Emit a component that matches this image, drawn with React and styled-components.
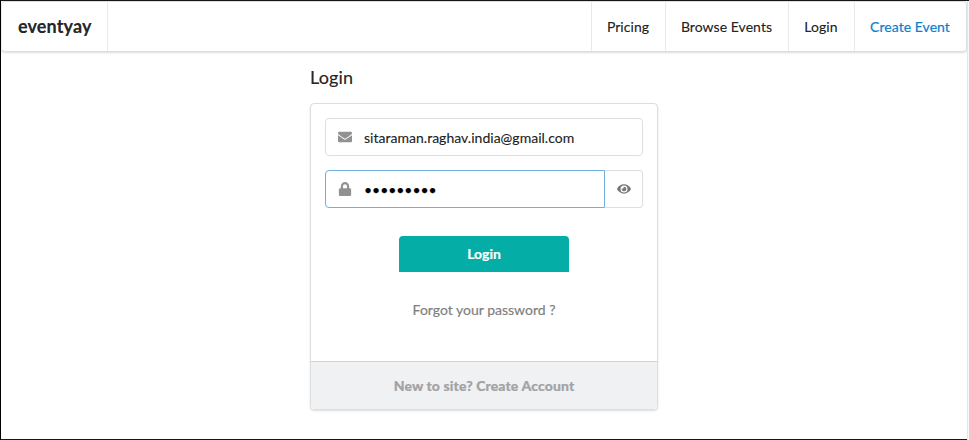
import React from 'react';
import styled, { createGlobalStyle } from 'styled-components';
import { FaEnvelope, FaLock, FaEye } from 'react-icons/fa';

const GlobalStyle = createGlobalStyle`
  * { box-sizing: border-box; }
  body {
    margin: 0;
    background: #fff;
    color: rgba(0, 0, 0, 0.87);
    font: 14px/20px Lato, "Liberation Sans", sans-serif;
    -webkit-text-stroke: 0.2px;
  }
`;

const Frame = styled.div`
  width: 969px;
  height: 440px;
  border-top: 1px solid #18161b;
  border-left: 1px solid #000;
  display: flex;
  overflow: hidden;
`;

const Page = styled.div`
  width: 966px;
  height: 439px;
  border-bottom: 1px solid #18161b;
`;

const Gutter = styled.div`
  flex: 1;
  background: #fafafa;
  border-left: 1px solid #e5e5e5;
`;

const NavBar = styled.nav`
  display: flex;
  height: 51px;
  border: 1px solid rgba(34, 36, 38, 0.15);
  border-left-color: rgba(34, 36, 38, 0.08);
  border-radius: 4px;
  box-shadow: 0 1px 2px rgba(34, 36, 38, 0.15);
`;

const NavItem = styled.a`
  display: flex;
  align-items: center;
  justify-content: center;
  width: ${(p) => p.$width}px;
  border-left: 1px solid rgba(34, 36, 38, 0.1);
  padding-right: 1px;
  letter-spacing: 0.05px;
  color: ${(p) => (p.$accent ? '#0a80cc' : 'inherit')};
`;

const Brand = styled.a`
  display: flex;
  align-items: center;
  width: 106px;
  padding: 0 0 1px 16px;
  border-right: 1px solid rgba(34, 36, 38, 0.1);
  margin-right: auto;
  font-size: 18px;
  font-weight: 700;
  letter-spacing: 0.12px;
`;

const Main = styled.main`
  width: 348px;
  margin: 0 0 0 309px;
`;

const Title = styled.h1`
  margin: 13px 0 14px;
  font-size: 18px;
  line-height: 24px;
  font-weight: 400;
  letter-spacing: 0.12px;
`;

const Card = styled.section`
  height: 307px;
  display: flex;
  flex-direction: column;
  border: 1px solid rgba(34, 36, 38, 0.15);
  border-radius: 4px;
  box-shadow: 0 1px 2px rgba(34, 36, 38, 0.15);
`;

const Form = styled.div`
  flex: 1;
  display: flex;
  flex-direction: column;
  align-items: center;
  padding: 14px;
`;

const FieldRow = styled.div`
  display: flex;
  width: 100%;
  height: 38px;
  margin-bottom: 14px;
`;

const Field = styled.label`
  flex: 1;
  display: flex;
  align-items: center;
  border: 1px solid ${(p) => (p.$focused ? '#6eb0d9' : '#dededf')};
  border-radius: ${(p) => (p.$focused ? '4px 0 0 4px' : '4px')};

  svg {
    width: 14px;
    margin: 0 12px;
    flex: none;
    color: #919191;
  }
`;

const Input = styled.input`
  width: 220px;
  border: 0;
  outline: 0;
  padding: 0;
  background: transparent;
  color: ${(p) => (p.type === 'password' ? '#000' : 'rgba(0, 0, 0, 0.87)')};
  font: 14px Lato, sans-serif;
  letter-spacing: ${(p) => (p.type === 'password' ? '-0.05px' : '0.02px')};
`;

const RevealButton = styled.button`
  display: flex;
  align-items: center;
  justify-content: center;
  width: 38px;
  padding: 0;
  background: #fff;
  border: 1px solid #dededf;
  border-left: 0;
  border-radius: 0 4px 4px 0;
  color: #777;
`;

const SubmitButton = styled.button`
  width: 170px;
  height: 36px;
  margin-top: 14px;
  padding: 0 0 2px;
  border: 0;
  border-radius: 4px 4px 0 0;
  background: #04ada5;
  color: #fff;
  font: 700 14px Lato, sans-serif;
`;

const ForgotLink = styled.a`
  margin-top: 28px;
  color: #7f7f7f;
`;

const CardFooter = styled.footer`
  height: 48px;
  border-top: 1px solid #d2d3d3;
  border-radius: 0 0 3px 3px;
  background: #f0f1f3;
  color: #a3a3a4;
  text-align: center;
  font-weight: 900;
  letter-spacing: 0.11px;
  line-height: 48px;
`;

export default function App() {
  return (
    <>
      <GlobalStyle />
      <Frame>
        <Page>
          <NavBar>
            <Brand>eventyay</Brand>
            <NavItem $width={74}>Pricing</NavItem>
            <NavItem $width={123}>Browse Events</NavItem>
            <NavItem $width={66}>Login</NavItem>
            <NavItem $width={112} $accent>Create Event</NavItem>
          </NavBar>
          <Main>
            <Title>Login</Title>
            <Card>
              <Form>
                <FieldRow>
                  <Field>
                    <FaEnvelope size={14} />
                    <Input type="text" defaultValue="sitaraman.raghav.india@gmail.com" />
                  </Field>
                </FieldRow>
                <FieldRow>
                  <Field $focused>
                    <FaLock size={14} />
                    <Input type="password" defaultValue="eventyay1" />
                  </Field>
                  <RevealButton aria-label="Show password">
                    <FaEye size={14} />
                  </RevealButton>
                </FieldRow>
                <SubmitButton>Login</SubmitButton>
                <ForgotLink>Forgot your password ?</ForgotLink>
              </Form>
              <CardFooter>New to site? Create Account</CardFooter>
            </Card>
          </Main>
        </Page>
        <Gutter />
      </Frame>
    </>
  );
}
